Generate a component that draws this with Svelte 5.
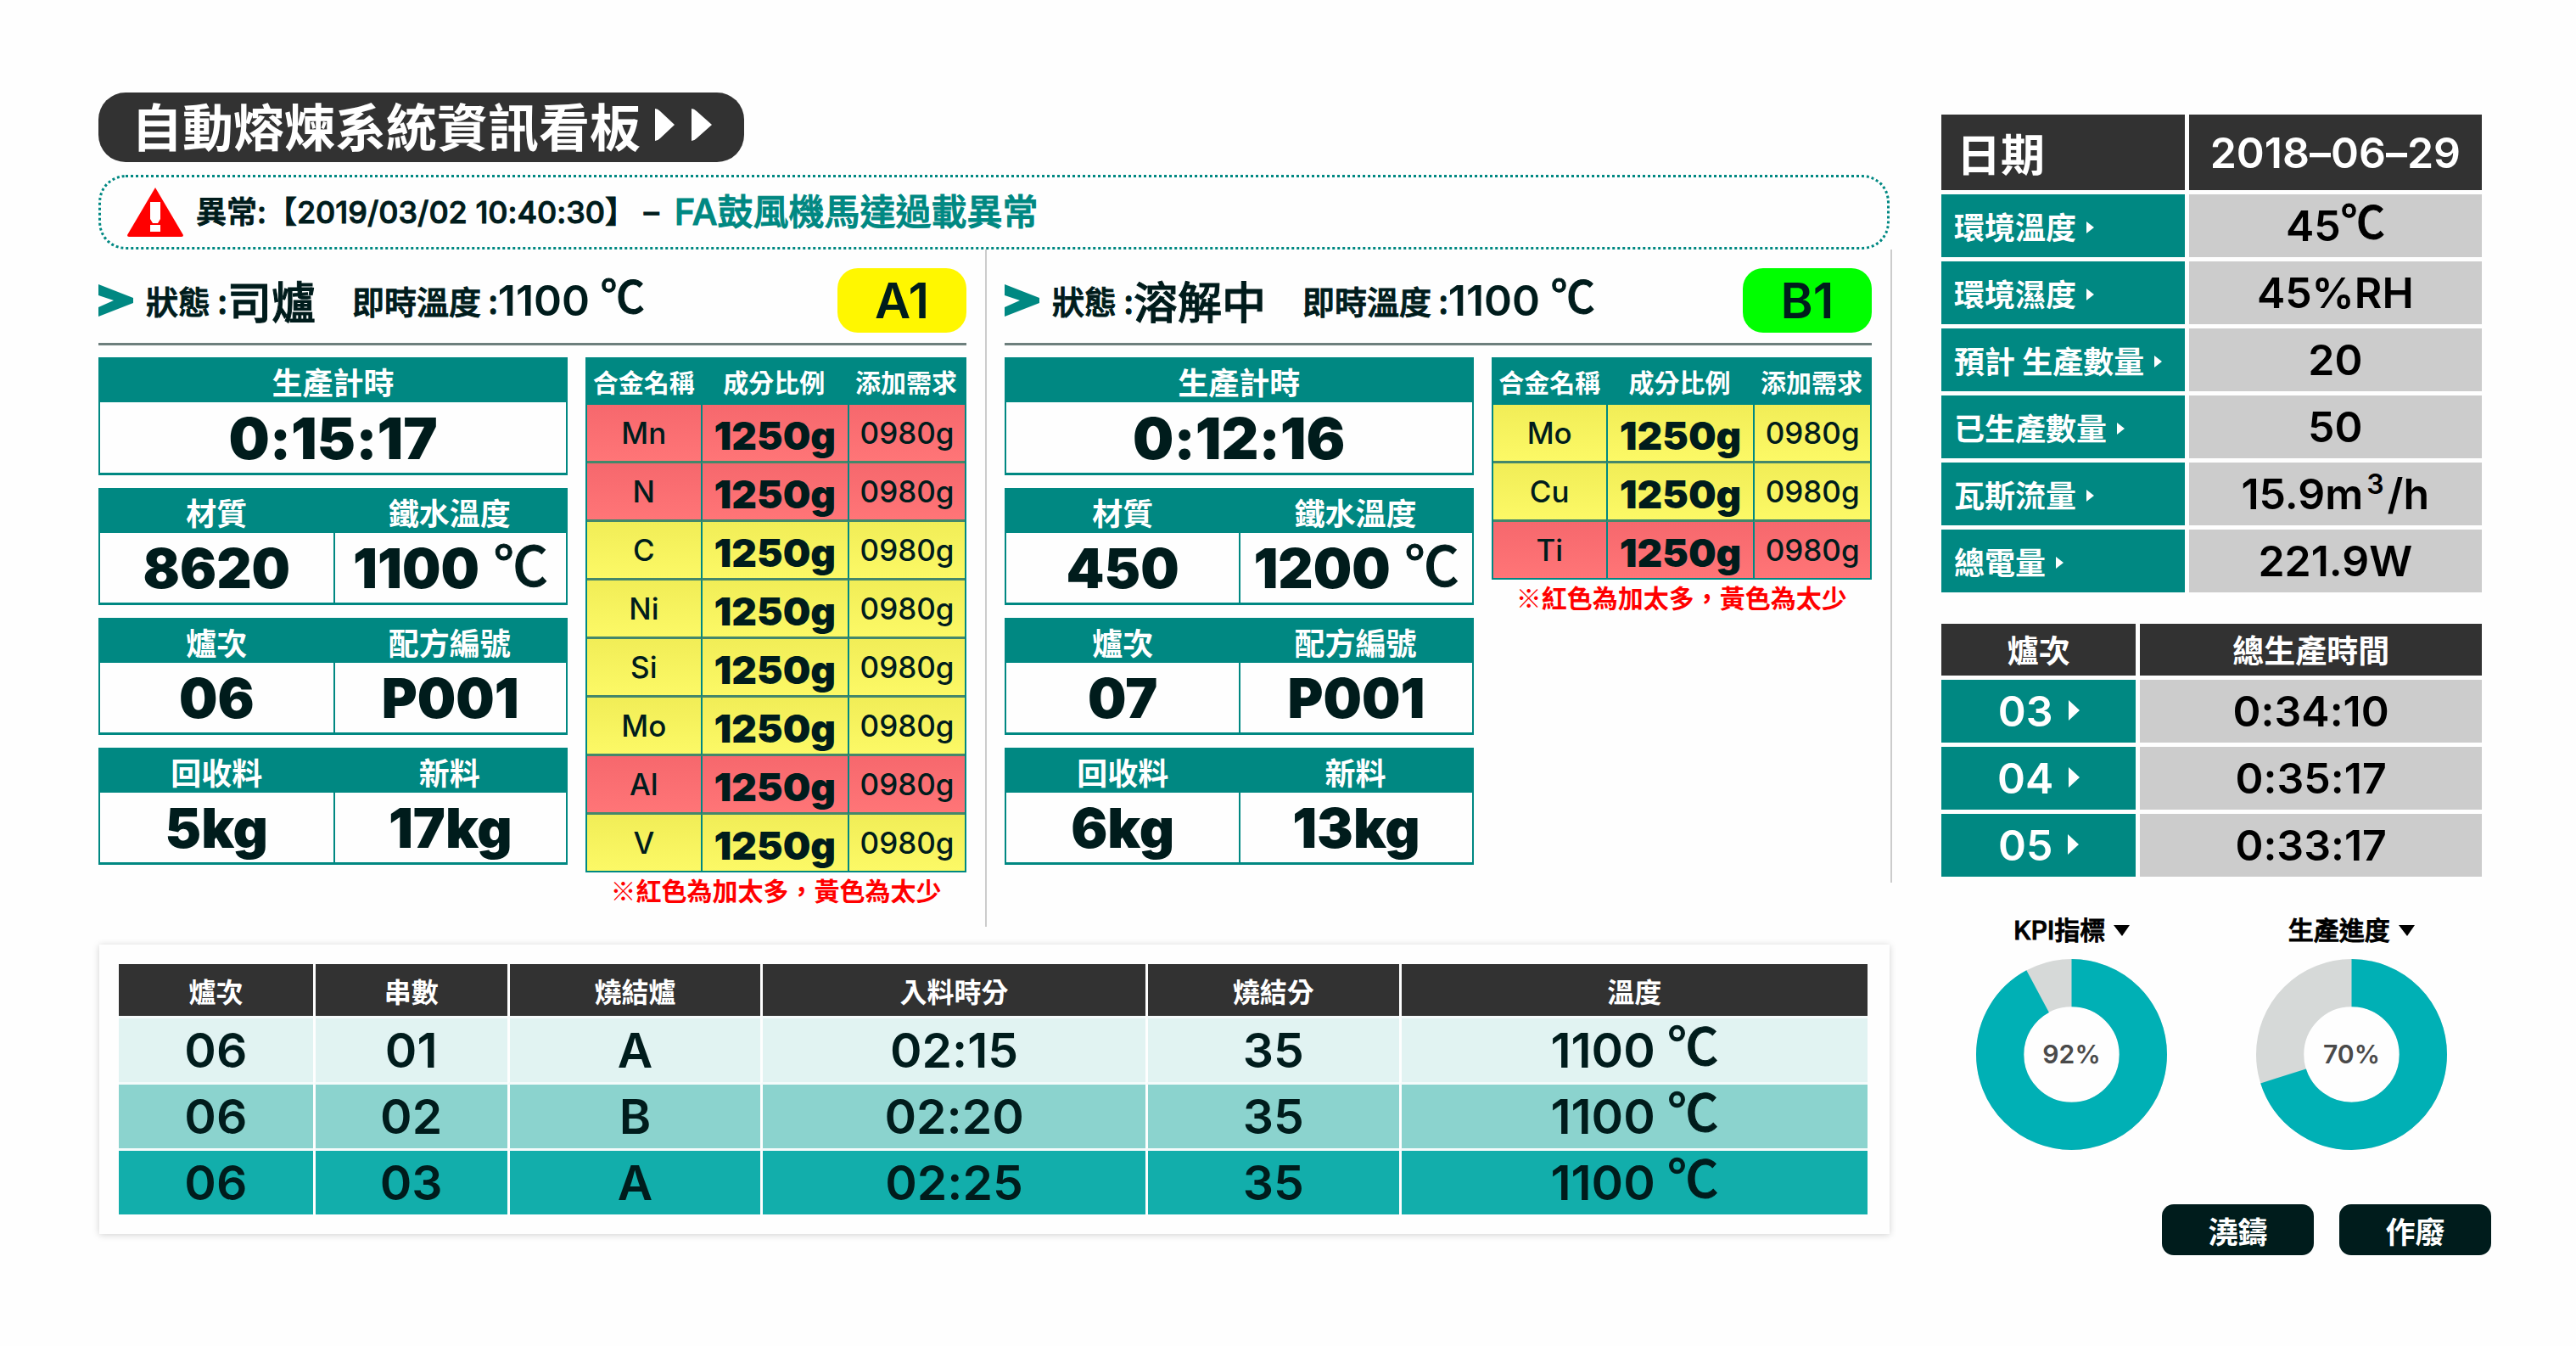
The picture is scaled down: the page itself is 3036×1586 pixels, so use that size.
<script>
  const alloy = (name, level) => ({ name, level, ratio: '1250g', need: '0980g' });

  const furnaces = [
    {
      id: 'A1', tone: 'yellow', state: '司爐', temp: '1100', timer: '0:15:17',
      groups: [
        [{ label: '材質', value: '8620' }, { label: '鐵水溫度', value: '1100', unit: '℃' }],
        [{ label: '爐次', value: '06' }, { label: '配方編號', value: 'P001' }],
        [{ label: '回收料', value: '5kg' }, { label: '新料', value: '17kg' }]
      ],
      alloys: [
        alloy('Mn', 'high'), alloy('N', 'high'), alloy('C', 'low'), alloy('Ni', 'low'),
        alloy('Si', 'low'), alloy('Mo', 'low'), alloy('Al', 'high'), alloy('V', 'low')
      ]
    },
    {
      id: 'B1', tone: 'green', state: '溶解中', temp: '1100', timer: '0:12:16',
      groups: [
        [{ label: '材質', value: '450' }, { label: '鐵水溫度', value: '1200', unit: '℃' }],
        [{ label: '爐次', value: '07' }, { label: '配方編號', value: 'P001' }],
        [{ label: '回收料', value: '6kg' }, { label: '新料', value: '13kg' }]
      ],
      alloys: [alloy('Mo', 'low'), alloy('Cu', 'low'), alloy('Ti', 'high')]
    }
  ];

  const sinterHeads = ['爐次', '串數', '燒結爐', '入料時分', '燒結分', '溫度'];
  const sinterRows = [
    ['06', '01', 'A', '02:15', '35', '1100'],
    ['06', '02', 'B', '02:20', '35', '1100'],
    ['06', '03', 'A', '02:25', '35', '1100']
  ];

  const readings = [
    { label: '環境溫度', value: '45', unit: '℃' },
    { label: '環境濕度', value: '45%RH' },
    { label: '預計 生產數量', value: '20' },
    { label: '已生產數量', value: '50' },
    { label: '瓦斯流量', value: '15.9m', sup: '3', tail: '/h' },
    { label: '總電量', value: '221.9W' }
  ];

  const times = [['03', '0:34:10'], ['04', '0:35:17'], ['05', '0:33:17']];
  const gauges = [{ label: 'KPI指標', value: 92 }, { label: '生產進度', value: 70 }];

  const radius = 42;
  const ring = 2 * Math.PI * radius;
</script>

<div class="board">
  <main>
    <h1>
      自動熔煉系統資訊看板
      <svg class="forward" viewBox="0 0 68 38" aria-hidden="true">
        <path d="M0 0Q3 0 6 3L23 19 6 35Q3 38 0 38ZM43 0Q46 0 49 3L67 19 49 35Q46 38 43 38Z" />
      </svg>
    </h1>

    <div class="alert" role="alert">
      <svg viewBox="0 0 66 58" aria-hidden="true">
        <path d="M33 0 66 56Q66 58 64 58H2Q0 58 0 56Z" fill="#f00" />
        <path d="M27 17h12v20l-3 5h-6l-3-5ZM27 44h12v8H27Z" fill="#fff" />
      </svg>
      <span>異常:【2019/03/02 10:40:30】 –</span>
      <strong>FA鼓風機馬達過載異常</strong>
    </div>

    <div class="furnaces">
      {#each furnaces as f}
        <section class="furnace">
          <header>
            <svg class="pointer" viewBox="0 0 41 38" aria-hidden="true">
              <path d="M0 0 41 16V22L0 38V27L18 19 0 13Z" />
            </svg>
            <span class="key">狀態 :</span><span class="state">{f.state}</span>
            <span class="key second">即時溫度 :</span><span class="temp">{f.temp} <i>℃</i></span>
            <b class="badge {f.tone}">{f.id}</b>
          </header>
          <div class="detail">
            <div class="stats">
              <dl class="box single">
                <div><dt>生產計時</dt><dd>{f.timer}</dd></div>
              </dl>
              {#each f.groups as group}
                <dl class="box">
                  {#each group as item}
                    <div><dt>{item.label}</dt><dd>{item.value}{#if item.unit}&nbsp;<i>{item.unit}</i>{/if}</dd></div>
                  {/each}
                </dl>
              {/each}
            </div>
            <div class="alloys">
              <table>
                <colgroup><col class="name" /><col class="ratio" /><col class="need" /></colgroup>
                <thead><tr><th>合金名稱</th><th>成分比例</th><th>添加需求</th></tr></thead>
                <tbody>
                  {#each f.alloys as a}
                    <tr class={a.level}>
                      <td>{a.name}</td><td class="heavy">{a.ratio}</td><td class="light">{a.need}</td>
                    </tr>
                  {/each}
                </tbody>
              </table>
              <p>※紅色為加太多，黃色為太少</p>
            </div>
          </div>
        </section>
      {/each}
    </div>

    <section class="card">
      <table class="sinter">
        <colgroup>
          <col class="c1" /><col class="c1" /><col class="c2" /><col class="c3" /><col class="c2" /><col />
        </colgroup>
        <thead><tr>{#each sinterHeads as h}<th>{h}</th>{/each}</tr></thead>
        <tbody>
          {#each sinterRows as row}
            <tr>
              {#each row as cell, i}
                <td>{cell}{#if i === 5}&nbsp;<i>℃</i>{/if}</td>
              {/each}
            </tr>
          {/each}
        </tbody>
      </table>
    </section>
  </main>

  <aside>
    <table class="side env">
      <colgroup><col class="label" /><col /></colgroup>
      <thead><tr><th>日期</th><th>2018–06–29</th></tr></thead>
      <tbody>
        {#each readings as r}
          <tr>
            <th scope="row">{r.label}<svg viewBox="0 0 9 14" aria-hidden="true"><path d="M0 0 9 7 0 14Z" /></svg></th>
            <td>{r.value}{#if r.unit}<i>{r.unit}</i>{/if}{#if r.sup}<sup>{r.sup}</sup>{r.tail}{/if}</td>
          </tr>
        {/each}
      </tbody>
    </table>

    <table class="side times">
      <colgroup><col class="label" /><col /></colgroup>
      <thead><tr><th>爐次</th><th>總生產時間</th></tr></thead>
      <tbody>
        {#each times as [no, time]}
          <tr>
            <th scope="row">{no}<svg viewBox="0 0 13 24" aria-hidden="true"><path d="M0 0 13 12 0 24Z" /></svg></th>
            <td>{time}</td>
          </tr>
        {/each}
      </tbody>
    </table>

    <div class="gauges">
      {#each gauges as g}
        <figure>
          <figcaption>{g.label}<svg viewBox="0 0 19 13" aria-hidden="true"><path d="M0 0H19L10 13Z" /></svg></figcaption>
          <svg class="donut" viewBox="0 0 112 112" role="img" aria-label="{g.label} {g.value}%">
            <circle cx="56" cy="56" r={radius} stroke="#d6d9d8" />
            <circle cx="56" cy="56" r={radius} stroke="#00b0b5"
              stroke-dasharray="{(ring * g.value) / 100} {ring}" transform="rotate(-90 56 56)" />
            <text x="56" y="61">{g.value}%</text>
          </svg>
        </figure>
      {/each}
    </div>

    <div class="actions">
      <button type="button">澆鑄</button>
      <button type="button">作廢</button>
    </div>
  </aside>
</div>

<style>
  :global(body) {
    background: #fefefe;
  }

  .board {
    --teal: #008882;
    --ink: #001c1c;
    --dark: #323232;
    --cjk: "Noto Sans CJK TC", sans-serif;
    --latin: Inter, "Noto Sans CJK TC", sans-serif;
    display: grid;
    grid-template-columns: minmax(0, 2114fr) minmax(0, 637fr);
    column-gap: 58px;
    padding: 109px 111px 0 116px;
    color: var(--ink);
    font-family: var(--latin);
    font-feature-settings: "calt" 0;
    font-weight: 600;
    line-height: 1;
  }

  i {
    font-family: var(--cjk);
    font-style: normal;
    font-weight: 500;
    line-height: 0;
    vertical-align: 3px;
    -webkit-text-stroke: 1px currentColor;
  }

  table {
    width: 100%;
    table-layout: fixed;
    border-collapse: separate;
    border-spacing: 0;
  }

  th, td {
    padding: 0;
  }

  h1 {
    box-sizing: border-box;
    display: flex;
    align-items: center;
    gap: 17px;
    width: fit-content;
    height: 82px;
    margin: 0 0 15px;
    padding: 0 37px 6px 39px;
    border-radius: 32px;
    background: var(--dark);
    color: #fff;
    font: 700 60px/1 var(--cjk);
  }

  .forward {
    width: 68px;
    height: 38px;
    fill: #fff;
  }

  .alert {
    display: flex;
    align-items: center;
    height: 82px;
    margin-right: 3px;
    padding-left: 31px;
    border: 3px dotted var(--teal);
    border-radius: 32px;
    font-size: 36px;
    font-weight: 500;
  }

  .alert svg {
    width: 66px;
    height: 58px;
    margin-right: 15px;
  }

  .alert span, .alert strong {
    -webkit-text-stroke: 1px currentColor;
  }

  .alert strong {
    margin-left: 18px;
    color: var(--teal);
    font-size: 42px;
    font-weight: 500;
  }

  .furnaces {
    display: grid;
    grid-template-columns: 1047fr 1067fr;
    align-items: start;
  }

  .furnace {
    padding: 22px 22px 29px 0;
    border-right: 2px solid #ccc;
  }

  .furnace + .furnace {
    padding: 22px 22px 21px 21px;
  }

  .furnace header {
    display: flex;
    align-items: center;
    height: 76px;
    padding-bottom: 12px;
    border-bottom: 3px solid #6d7f7d;
  }

  .pointer {
    width: 41px;
    height: 38px;
    margin-right: 15px;
    fill: var(--teal);
  }

  .key, .state {
    font: 500 38px/1 var(--cjk);
    -webkit-text-stroke: 1px currentColor;
  }

  .second {
    margin-left: 43px;
  }

  .state {
    font-size: 52px;
  }

  .temp {
    font-size: 50px;
  }

  .temp i {
    font-size: 52px;
  }

  .badge {
    display: grid;
    place-items: center;
    width: 152px;
    height: 76px;
    margin-left: auto;
    border-radius: 24px;
    font-size: 58px;
    font-weight: 600;
  }

  .yellow {
    background: #fff700;
  }

  .green {
    background: #00ff00;
  }

  .detail {
    display: grid;
    grid-template-columns: 552fr 448fr;
    gap: 21px;
    align-items: start;
    margin-top: 14px;
  }

  .stats {
    display: grid;
    gap: 15px;
  }

  .box {
    display: grid;
    grid-template-columns: 1fr 1fr;
    margin: 0;
    border: 2px solid var(--teal);
    border-bottom-width: 3px;
  }

  .single {
    grid-template-columns: 1fr;
  }

  .box > div + div dd {
    border-left: 2px solid var(--teal);
  }

  dt {
    display: grid;
    place-items: center;
    height: 51px;
    background: var(--teal);
    color: #fff;
    font: 700 36px/1 var(--cjk);
  }

  dd {
    height: 82px;
    margin: 0;
    font-size: 64px;
    font-weight: 900;
    line-height: 84px;
    text-align: center;
    white-space: nowrap;
  }

  .single dd {
    height: 83px;
    font-size: 68px;
  }

  dd i {
    margin-left: 4px;
  }

  .alloys table {
    border: 2px solid var(--teal);
    border-top: 0;
  }

  .name {
    width: 30%;
  }

  .ratio {
    width: 39%;
  }

  .alloys th {
    height: 56px;
    background: var(--teal);
    color: #fff;
    font: 700 30px/1 var(--cjk);
  }

  .alloys td {
    height: 66px;
    border-bottom: 3px solid #45876a;
    font-size: 35px;
    font-weight: 500;
    text-align: center;
  }

  .alloys tr:last-child td {
    border-bottom: 0;
  }

  .alloys td + td {
    border-left: 2px solid var(--teal);
  }

  .alloys .heavy {
    height: 60px;
    padding-top: 6px;
    font-size: 46px;
    font-weight: 900;
  }

  .high td {
    background: linear-gradient(#f6686d, #ff7577);
  }

  .low td {
    background: linear-gradient(#f1ed57, #fcf966);
  }

  .alloys p {
    margin: 5px 0 0;
    color: #f00;
    font: 700 30px/1 var(--cjk);
    text-align: center;
    white-space: nowrap;
  }

  .card {
    margin: 21px 3px 0 1px;
    padding: 23px 26px 23px 23px;
    background: #fefefe;
    box-shadow: 0 1px 8px rgb(0 0 0 / 18%);
  }

  .sinter .c1 {
    width: 11.1%;
  }

  .sinter .c2 {
    width: 14.5%;
  }

  .sinter .c3 {
    width: 22%;
  }

  .sinter th {
    height: 61px;
    background: var(--dark);
    color: #fff;
    font: 700 32px/1 var(--cjk);
  }

  .sinter th, .sinter td {
    border-bottom: 3px solid #f4fbfb;
  }

  .sinter td {
    height: 75px;
    font-size: 57px;
    text-align: center;
  }

  .sinter i {
    font-size: 60px;
  }

  .sinter th + th, .sinter td + td {
    border-left: 3px solid #fefefe;
  }

  .sinter tr:nth-child(1) td {
    background: #e1f3f2;
  }

  .sinter tr:nth-child(2) td {
    background: #8bd3ce;
  }

  .sinter tbody tr:nth-child(3) td {
    border-bottom: 0;
    background: #12aeab;
  }

  aside {
    padding-top: 26px;
  }

  .side td, .side thead th {
    border-left: 5px solid #fefefe;
  }

  .side thead th:first-child {
    border-left: 0;
  }

  .side thead th {
    background: var(--dark);
    color: #fff;
  }

  .side tbody th, .side tbody td {
    height: 74px;
    border-top: 5px solid #fefefe;
  }

  .side tbody th {
    background: var(--teal);
    color: #fff;
    fill: #fff;
  }

  .side td {
    background: #ccc;
    color: #000;
    font-size: 50px;
    text-align: center;
  }

  .side i {
    font-size: 52px;
  }

  .env .label {
    width: 45%;
  }

  .env thead th {
    height: 89px;
    font-size: 50px;
    font-weight: 600;
  }

  .env thead th:first-child {
    padding-left: 18px;
    font: 700 52px/1 var(--cjk);
    text-align: left;
  }

  .env tbody th {
    padding-left: 15px;
    font: 700 36px/1 var(--cjk);
    text-align: left;
    white-space: nowrap;
  }

  .env tbody svg {
    width: 9px;
    height: 14px;
    margin: 0 0 7px 12px;
  }

  sup {
    margin: 0 4px;
    font-size: 32px;
    line-height: 0;
  }

  .times {
    margin-top: 37px;
  }

  .times .label {
    width: 36%;
  }

  .times thead th {
    height: 61px;
    font: 700 37px/1 var(--cjk);
  }

  .times tbody th {
    font-size: 50px;
    font-weight: 600;
  }

  .times tbody svg {
    width: 13px;
    height: 24px;
    margin: 0 0 7px 18px;
  }

  .gauges {
    display: grid;
    grid-template-columns: 1fr 1fr;
    margin: 47px -11px 0;
  }

  figure {
    display: grid;
    justify-items: center;
    gap: 18px;
    margin: 0;
  }

  figcaption {
    display: flex;
    align-items: center;
    gap: 10px;
    height: 32px;
    color: #000;
    font-size: 30px;
    font-weight: 500;
    -webkit-text-stroke: 1px currentColor;
  }

  figcaption svg {
    width: 19px;
    height: 13px;
  }

  .donut {
    width: 225px;
    height: 225px;
  }

  .donut circle {
    fill: none;
    stroke-width: 28px;
  }

  .donut text {
    fill: #4a4a4a;
    font-size: 15px;
    text-anchor: middle;
  }

  .actions {
    display: flex;
    justify-content: flex-end;
    gap: 30px;
    margin: 64px -11px 0 0;
  }

  button {
    width: 179px;
    height: 60px;
    padding: 0;
    border: 0;
    border-radius: 14px;
    background: var(--ink);
    color: #fff;
    font: 700 35px/1 var(--cjk);
  }
</style>
